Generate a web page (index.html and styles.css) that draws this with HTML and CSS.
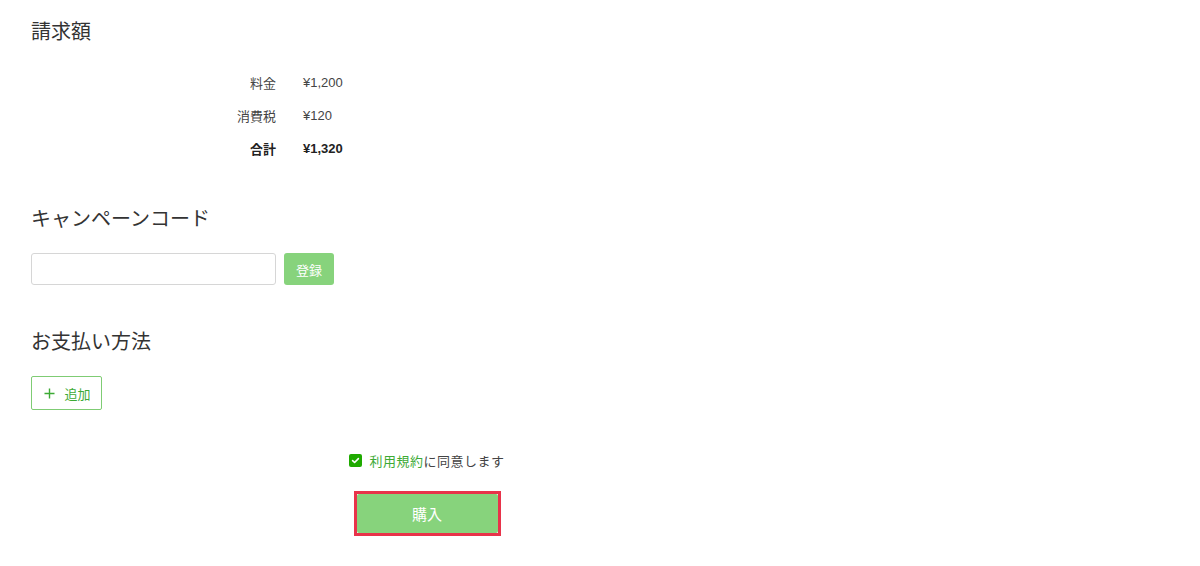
FILE: index.html
```html
<!DOCTYPE html>
<html lang="ja">
<head>
<meta charset="utf-8">
<link rel="stylesheet" href="styles.css">
</head>
<body>
<main class="page">
  <section class="billing">
    <h2 class="heading">請求額</h2>
    <div class="amounts">
      <div class="label">料金</div><div class="value">¥1,200</div>
      <div class="label">消費税</div><div class="value">¥120</div>
      <div class="label total">合計</div><div class="value total">¥1,320</div>
    </div>
  </section>
  <section class="campaign">
    <h2 class="heading">キャンペーンコード</h2>
    <div class="code-row">
      <input class="code-input" type="text">
      <button class="btn-register">登録</button>
    </div>
  </section>
  <section class="payment">
    <h2 class="heading">お支払い方法</h2>
    <button class="btn-add"><svg class="plus" width="11" height="11" viewBox="0 0 11 11"><path d="M5.5 0.5 V10.5 M0.5 5.5 H10.5" stroke="#3daa35" stroke-width="1.4" fill="none"/></svg>追加</button>
  </section>
  <section class="confirm">
    <label class="agree">
      <span class="check"><svg width="9" height="9" viewBox="0 0 9 9"><path d="M1.6 4.6 L3.6 6.5 L7.4 2.6" fill="none" stroke="#fff" stroke-width="1.6" stroke-linecap="round" stroke-linejoin="round"/></svg></span>
      <span class="agree-text"><span class="link">利用規約</span>に同意します</span>
    </label>
    <div class="buy-wrap">
      <button class="btn-buy">購入</button>
    </div>
  </section>
</main>
</body>
</html>
```
FILE: styles.css
```css
* { box-sizing: border-box; }
body {
  margin: 0;
  background: #fff;
  font-family: "Liberation Sans", "Noto Sans CJK JP", sans-serif;
  color: #333;
}
.page {
  padding: 19px 0 0 31px;
}
.heading {
  margin: 0;
  font-size: 20px;
  font-weight: 400;
  line-height: 26px;
  color: #333;
}
.amounts {
  display: grid;
  grid-template-columns: 245px auto;
  column-gap: 27px;
  grid-auto-rows: 33px;
  align-items: center;
  margin-top: 21px;
  font-size: 13px;
  color: #444;
}
.label { text-align: right; }
.total { font-weight: 700; color: #222; }
.campaign { margin-top: 41px; }
.code-row {
  display: flex;
  gap: 8px;
  margin-top: 21px;
}
.code-input {
  width: 245px;
  height: 32px;
  border: 1px solid #d6d6d6;
  border-radius: 3px;
  margin: 0;
  padding: 0 8px;
  font: inherit;
}
.btn-register {
  width: 50px;
  height: 32px;
  border: none;
  border-radius: 3px;
  background: #87d37c;
  color: #fff;
  font: inherit;
  font-size: 13px;
  padding: 0;
}
.payment { margin-top: 44px; }
.btn-add {
  margin-top: 21px;
  height: 34px;
  width: 71px;
  display: flex;
  align-items: center;
  justify-content: center;
  gap: 9px;
  background: #fff;
  border: 1px solid #7fcc74;
  border-radius: 2px;
  color: #3daa35;
  font: inherit;
  font-size: 13px;
  padding: 0 0 0 2px;
}
.plus { display: block; }
.confirm {
  width: 792px;
  margin-top: 41px;
  display: flex;
  flex-direction: column;
  align-items: center;
}
.agree {
  display: flex;
  align-items: center;
  gap: 7px;
  font-size: 13px;
  letter-spacing: 0.5px;
  color: #444;
  height: 18px;
}
.check {
  width: 13px;
  height: 13px;
  border-radius: 2px;
  background: #1faa00;
  display: flex;
  align-items: center;
  justify-content: center;
}
.link { color: #3daa35; }
.buy-wrap {
  margin-top: 22px;
  border: 3px solid #e8334a;
  padding: 0;
}
.btn-buy {
  display: block;
  width: 141px;
  height: 39px;
  border: none;
  border-radius: 2px;
  background: #87d37c;
  color: #fff;
  font: inherit;
  font-size: 15px;
  padding: 0;
}
```
